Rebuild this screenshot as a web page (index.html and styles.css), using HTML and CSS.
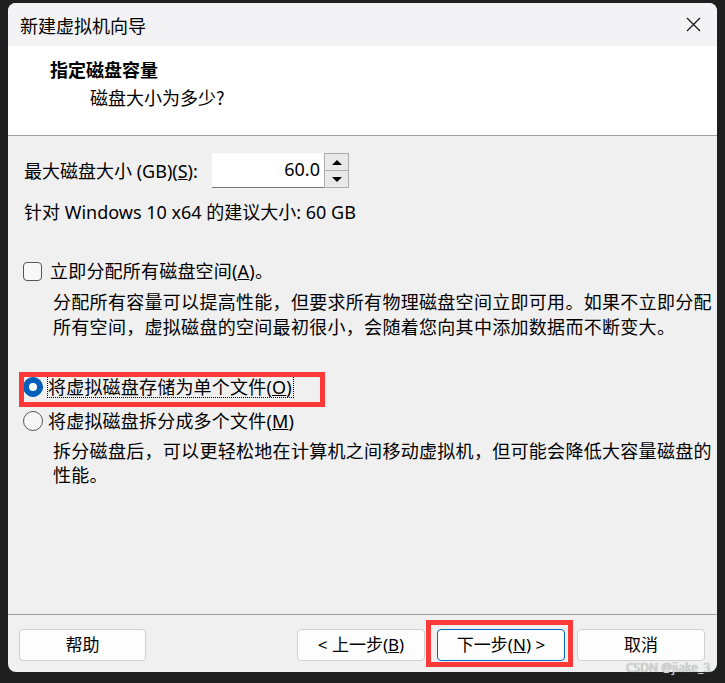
FILE: index.html
```html
<!DOCTYPE html>
<html lang="zh-CN">
<head>
<meta charset="utf-8">
<title>新建虚拟机向导</title>
<link rel="stylesheet" href="styles.css">
</head>
<body>
<div class="page">
  <div class="window">
    <div class="titlebar">
      <span class="title">新建虚拟机向导</span>
      <svg class="close" width="15" height="15" viewBox="0 0 15 15"><path d="M1 1 L14 14 M14 1 L1 14" stroke="#1a1a1a" stroke-width="1.3" fill="none"/></svg>
    </div>
    <div class="header">
      <div class="h-title">指定磁盘容量</div>
      <div class="h-sub">磁盘大小为多少?</div>
    </div>
    <div class="content">
      <div class="spin-row">
        <label class="spin-label">最大磁盘大小 (GB)(<u>S</u>):</label>
        <div class="spin">
          <div class="spin-input">60.0</div>
          <div class="spin-btns">
            <div class="spin-btn"><span class="tri-up"></span></div>
            <div class="spin-btn"><span class="tri-down"></span></div>
          </div>
        </div>
      </div>
      <div class="rec">针对 Windows 10 x64 的建议大小: 60 GB</div>

      <div class="check-row">
        <span class="checkbox"></span>
        <span class="opt-label">立即分配所有磁盘空间(<u>A</u>)。</span>
      </div>
      <div class="desc desc1">分配所有容量可以提高性能，但要求所有物理磁盘空间立即可用。如果不立即分配<br>所有空间，虚拟磁盘的空间最初很小，会随着您向其中添加数据而不断变大。</div>

      <div class="radio-row first">
        <span class="radio checked"></span>
        <span class="opt-label focus">将虚拟磁盘存储为单个文件(<u>O</u>)</span>
      </div>
      <div class="radio-row second">
        <span class="radio"></span>
        <span class="opt-label">将虚拟磁盘拆分成多个文件(<u>M</u>)</span>
      </div>
      <div class="desc desc2">拆分磁盘后，可以更轻松地在计算机之间移动虚拟机，但可能会降低大容量磁盘的<br>性能。</div>
    </div>
    <div class="footer">
      <button class="btn help">帮助</button>
      <button class="btn back">&lt; 上一步(<u>B</u>)</button>
      <button class="btn next">下一步(<u>N</u>) &gt;</button>
      <button class="btn cancel">取消</button>
    </div>
    <div class="mark mark-radio"></div>
    <div class="mark mark-next"></div>
  </div>
  <div class="watermark">CSDN @jiake_3</div>
</div>
</body>
</html>
```
FILE: styles.css
```css
* { box-sizing: border-box; }
html, body { margin: 0; padding: 0; }
body {
  background: #1f1f1f;
  width: 725px;
  height: 683px;
  overflow: hidden;
  font-family: "Noto Sans", "Noto Sans CJK SC", sans-serif;
  color: #000;
}
.page { position: relative; width: 725px; height: 683px; padding: 3px 0 0 8px; }
.window {
  position: relative;
  width: 709px;
  height: 669px;
  border-radius: 8px;
  overflow: hidden;
  background: #f0f0f0;
  display: flex;
  flex-direction: column;
}
.titlebar {
  height: 43px;
  flex: none;
  background: #f3f3f5;
  display: flex;
  align-items: center;
  justify-content: space-between;
  padding: 0 16px 0 12px;
}
.title { font-size: 18px; line-height: 24px; font-family: "Noto Sans CJK SC", sans-serif; }
.close { display: block; }
.header {
  flex: none;
  height: 90px;
  background: #fff;
  border-bottom: 1px solid #a0a0a0;
  padding: 9px 0 0 42px;
  font-family: "Noto Sans CJK SC", sans-serif;
  font-size: 18px;
  line-height: 28px;
}
.h-title { font-weight: 700; }
.h-sub { padding-left: 40px; }
.content {
  flex: 1;
  padding: 17px 0 0 16px;
  font-size: 18px;
}
.spin-row { display: flex; align-items: center; height: 35px; }
.spin-label { width: 188px; line-height: 24px; }
.spin { display: flex; height: 35px; }
.spin-input {
  width: 112px;
  height: 35px;
  background: #fff;
  border-bottom: 1px solid #7a7a7a;
  text-align: right;
  padding-right: 4px;
  line-height: 33px;
  font-size: 18px;
}
.spin-btns { display: flex; flex-direction: column; width: 25px; height: 35px; border: 1px solid #adadad; background: #e9e9e9; }
.spin-btn { flex: 1; display: flex; align-items: center; justify-content: center; }
.spin-btn + .spin-btn { border-top: 1px solid #adadad; }
.tri-up { width: 0; height: 0; border-left: 5px solid transparent; border-right: 5px solid transparent; border-bottom: 5px solid #000; }
.tri-down { width: 0; height: 0; border-left: 5px solid transparent; border-right: 5px solid transparent; border-top: 5px solid #000; }
.rec { margin-top: 12px; line-height: 24px; }
.check-row { margin-top: 35px; height: 24px; display: flex; align-items: center; }
.checkbox {
  width: 19px; height: 19px;
  margin-left: -1px;
  border: 1px solid #555;
  border-radius: 4px;
  background: #f7f7f7;
  margin-right: 8px;
  flex: none;
}
.opt-label { line-height: 24px; white-space: nowrap; letter-spacing: 0.2px; }
.desc { margin-left: 29px; white-space: nowrap; letter-spacing: 0.3px; }
.desc1 { margin-top: 7px; line-height: 25px; }
.desc2 { margin-top: 6px; line-height: 24px; }
.radio-row { height: 24px; display: flex; align-items: center; }
.radio-row.first { margin-top: 35px; }
.radio-row.second { margin-top: 10px; }
.radio {
  width: 20px; height: 20px;
  margin-left: -1px;
  margin-right: 5px;
  border-radius: 50%;
  border: 1px solid #555;
  background: #f7f7f7;
  flex: none;
  position: relative;
}
.radio.checked { background: #005fb8; border-color: #005fb8; }
.radio.checked::after {
  content: "";
  position: absolute;
  left: 5px; top: 5px;
  width: 8px; height: 8px;
  border-radius: 50%;
  background: #fff;
}
.opt-label.focus { border: 1px dotted #000; line-height: 20px; margin-left: -1px; padding-right: 1px; }
.footer {
  flex: none;
  height: 58px;
  border-top: 1px solid #a0a0a0;
  display: flex;
  padding: 14px 12px 0 11px;
}
.btn {
  height: 32px;
  width: 128px;
  background: #fdfdfd;
  border: 1px solid #d0d0d0;
  border-radius: 4px;
  font-family: "Noto Sans", "Noto Sans CJK SC", sans-serif;
  font-size: 17px;
  color: #000;
  padding: 0;
  line-height: 28px;
}
.help { width: 127px; margin-right: auto; }
.next { margin-left: 12px; border-color: #0067c0; }
.cancel { margin-left: 12px; }
.mark { position: absolute; border: 5px solid #ff3838; pointer-events: none; }
.mark-radio { left: 11px; top: 369px; width: 306px; height: 35px; }
.mark-next { left: 418px; top: 617px; width: 147px; height: 47px; }
.watermark {
  position: absolute;
  left: 626px;
  top: 660px;
  font-size: 12px;
  line-height: 16px;
  color: #d8d8d8;
  text-shadow: 0 0 1px #888;
  font-family: "Noto Sans", sans-serif;
}
```
